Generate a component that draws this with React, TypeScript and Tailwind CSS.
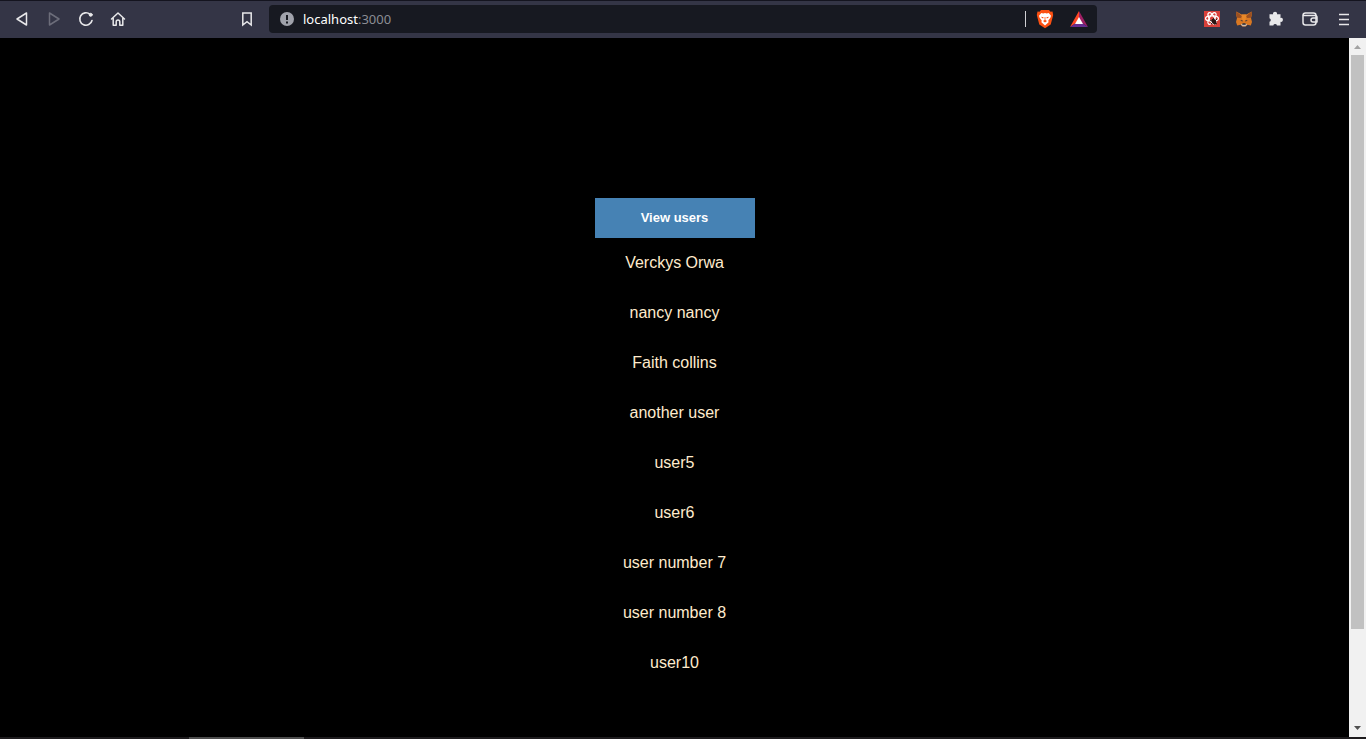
import React, { useState } from "react";

const users = [
  "Verckys Orwa",
  "nancy nancy",
  "Faith collins",
  "another user",
  "user5",
  "user6",
  "user number 7",
  "user number 8",
  "user10",
];

type IconButtonProps = { label: string; disabled?: boolean; children: React.ReactNode };

function IconButton({ label, disabled, children }: IconButtonProps) {
  return (
    <button
      type="button"
      aria-label={label}
      disabled={disabled}
      className="flex size-8 shrink-0 items-center justify-center text-[#e8e8ea] disabled:text-[#6c6d7a]"
    >
      <svg aria-hidden="true" viewBox="0 0 18 18" className="size-[18px]" fill="none" stroke="currentColor" strokeWidth="1.5" strokeLinejoin="round" strokeLinecap="round">
        {children}
      </svg>
    </button>
  );
}

function Toolbar() {
  const [address, setAddress] = useState("localhost:3000");
  const [host, port] = address.split(/(?=:)/);
  return (
    <header className="flex h-[38px] shrink-0 items-center border-t border-[#14141f] bg-[#343546] px-[6px] pb-[2px]">
      <nav aria-label="Navigation" className="flex">
        <IconButton label="Back">
          <path d="M13.500 3v12L4 9z" />
        </IconButton>
        <IconButton label="Forward" disabled>
          <path d="M4.500 3v12L14 9z" />
        </IconButton>
        <IconButton label="Reload">
          <path d="M15 10.500A6.200 6.200 0 1 1 13 4.300" strokeWidth="1.600" />
          <circle cx="13.700" cy="4.800" r="1.500" fill="currentColor" strokeWidth="1" />
        </IconButton>
        <IconButton label="Home">
          <path d="M2.500 9 9 3l6.500 6M4.200 8v7.200h3v-3.500a1.800 1.800 0 0 1 3.600 0v3.500h3V8" />
        </IconButton>
      </nav>
      <div className="ml-[97px]">
        <IconButton label="Bookmark this tab">
          <path d="M4.800 3h8.400v12L9 11.600 4.800 15z" strokeLinejoin="miter" />
        </IconButton>
      </div>
      <div className="ml-[6px] flex h-7 w-[828px] min-w-0 items-center rounded bg-[#171921] pl-[11px]">
        <svg aria-hidden="true" viewBox="0 0 14 14" className="size-[14px] shrink-0">
          <circle cx="7" cy="7" r="7" fill="#a0a2ab" />
          <path d="M6 3h2v5H6zM6 9.500h2v2H6z" fill="#171921" />
        </svg>
        <div className="relative ml-[9px] h-7 min-w-0 flex-1 font-['Noto_Sans','Open_Sans',sans-serif] text-[13px] leading-7">
          <input
            aria-label="Address"
            value={address}
            onChange={(e) => setAddress(e.target.value)}
            className="h-7 w-full bg-transparent text-transparent caret-white outline-none"
          />
          <div aria-hidden="true" className="pointer-events-none absolute inset-0 truncate text-white">
            {host}
            <span className="text-[#8b8d94]">{port}</span>
          </div>
        </div>
        <span className="h-4 w-px bg-[#d0d0d4]" />
        <button type="button" aria-label="Brave Shields" className="ml-[10px] flex h-7 w-[18px] shrink-0 items-center justify-center">
          <svg aria-hidden="true" viewBox="0 0 18 20" className="h-5 w-[18px]">
            <path d="M5 1h8l1.500 1.700 2-.1L17.200 6l-.5 2-2 7.500L9 19.300l-5.700-3.800-2-7.500-.5-2 .7-3.400 2 .1z" fill="#fb5012" />
            <path d="m5.300 4 2 .4L9 4l1.700.4 2-.4L15 6.800l-.6 2-2.100 2.800.3 1.600L9 16.400 5.400 13.200l.3-1.600-2.100-2.800-.6-2z" fill="#fff" />
            <path d="m5 7.800 2.600.5-.4 1.200-1.200-.4zM13 7.800l-2.600.5.4 1.200 1.200-.4zM8.600 8h.8v3l1.600 1L9 13.400 7 12l1.600-1z" fill="#fb5012" />
          </svg>
        </button>
        <button type="button" aria-label="Brave Rewards" className="mr-[9px] ml-4 flex h-7 w-[18px] shrink-0 items-center justify-center">
          <svg aria-hidden="true" viewBox="0 0 18 16" className="h-4 w-[18px]">
            <path d="M9 0 0 16l9-6z" fill="#ff4724" />
            <path d="m9 0 9 16-9-6z" fill="#9e1f63" />
            <path d="M0 16h18l-9-6z" fill="#662d91" />
            <path d="m9 6-4 7h8z" fill="#fff" />
          </svg>
        </button>
      </div>
      <div className="ml-auto flex items-center">
        <button type="button" aria-label="React Developer Tools" className="flex size-8 items-center justify-center">
          <svg aria-hidden="true" viewBox="0 0 16 16" className="size-4">
            <path d="M0 0h16v16H0z" fill="#d8403a" />
            <g fill="none" stroke="#fff" strokeWidth="1.200">
              <ellipse cx="8" cy="7.500" rx="6.500" ry="2.600" />
              <ellipse cx="8" cy="7.500" rx="6.500" ry="2.600" transform="rotate(60 8 7.500)" />
              <ellipse cx="8" cy="7.500" rx="6.500" ry="2.600" transform="rotate(120 8 7.500)" />
            </g>
            <ellipse cx="10" cy="10.500" rx="2" ry="3" fill="#2b1412" transform="rotate(-35 10 10.500)" />
            <path d="m6 9 7 4M7 13l6-5M9.500 7l1.500 7" stroke="#2b1412" strokeWidth="1" />
          </svg>
        </button>
        <button type="button" aria-label="MetaMask" className="flex size-8 items-center justify-center">
          <svg aria-hidden="true" viewBox="0 0 16 16" className="size-4">
            <path d="m.5.5 5 3h5l5-3 .3 3.500-.8 3 1 4-1.200 3.500-3.300-.8-1.900 1.800H6.400l-1.900-1.800-3.300.8L0 11l1-4-.8-3z" fill="#d97822" />
            <path d="M.5.500 6 5.200 4.800 7 1 6.800.2 4zM15.500.5 10 5.200 11.200 7l3.800-.2.800-2.800z" fill="#9a5022" />
            <path d="m5.500 3.500.8 5L8 10l1.700-1.500.8-5z" fill="#e98828" />
            <path d="m4.200 9.700 2-.8.6 1.600zM11.800 9.700l-2-.8-.6 1.600z" fill="#31343f" />
            <path d="m4.800 13.500 1.600-.8h3.200l1.600.8-1.700 1.800h-3z" fill="#c9bdb3" />
            <path d="M6.500 12.300h3l.3 1.500H6.200z" fill="#25272e" />
          </svg>
        </button>
        <IconButton label="Extensions">
          <path d="M2.500 4.300h3.600a2 2 0 1 1 3.900 0h3.500v3.600a2 2 0 1 1 0 3.900v3.700H10a1.900 1.900 0 0 0-3.700 0H2.500v-3.700a1.900 1.900 0 0 0 0-3.600z" fill="currentColor" stroke="none" />
        </IconButton>
        <div className="ml-[2px]">
          <IconButton label="Wallet">
            <rect x="2" y="3" width="13" height="12" rx="2.500" />
            <path d="M2.500 5.600H14a2 2 0 0 1 2 2v.7M16 8h-4a2 2 0 0 0 0 4h4z" />
          </IconButton>
        </div>
        <div className="ml-[2px]">
          <IconButton label="Menu">
            <path d="M4 4.500h10M4 9.500h10M4 14.500h10" strokeLinecap="butt" />
          </IconButton>
        </div>
      </div>
    </header>
  );
}

function Scrollbar() {
  return (
    <div aria-hidden="true" className="flex w-[17px] shrink-0 flex-col items-center bg-[#f1f1f1]">
      <svg viewBox="0 0 17 17" className="size-[17px] shrink-0">
        <path d="M5 11h7L8.500 7z" fill="#a3a3a3" />
      </svg>
      <div className="mb-[91px] w-[13px] flex-1 bg-[#c1c1c1]" />
      <svg viewBox="0 0 17 17" className="size-[17px] shrink-0">
        <path d="M5 6h7l-3.500 4z" fill="#505050" />
      </svg>
    </div>
  );
}

export default function App() {
  const [shown, setShown] = useState(true);
  return (
    <div className="flex h-screen flex-col bg-black">
      <Toolbar />
      <div className="flex min-h-0 flex-1">
        <main className="flex min-w-0 flex-1 flex-col items-center overflow-hidden pt-40 font-['Liberation_Sans',Arial,sans-serif]">
          <button
            type="button"
            onClick={() => setShown(!shown)}
            className="h-10 w-40 shrink-0 bg-[#4682b4] text-[13px] font-bold text-white"
          >
            View users
          </button>
          {shown && (
            <ul className="text-center text-base text-[#ffebcd]">
              {users.map((user) => (
                <li key={user} className="flex h-[50px] items-center justify-center">
                  {user}
                </li>
              ))}
            </ul>
          )}
        </main>
        <Scrollbar />
      </div>
      <div aria-hidden="true" className="flex h-[2px] shrink-0 bg-[#1d1b1d]">
        <div className="ml-[189px] w-[115px] bg-[#4d4d4d]" />
      </div>
    </div>
  );
}
